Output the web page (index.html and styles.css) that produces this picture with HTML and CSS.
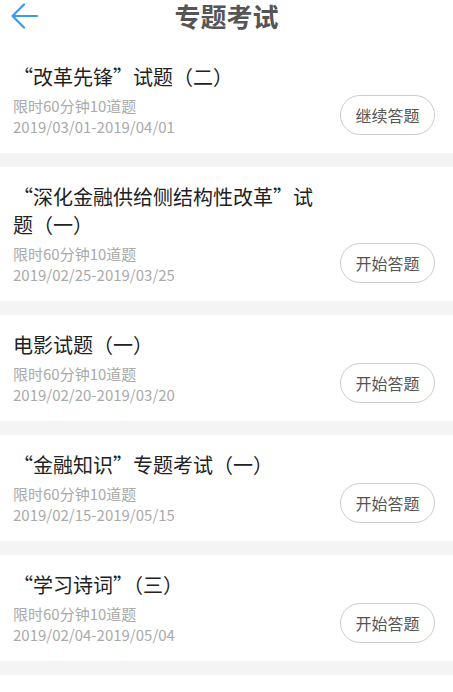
FILE: index.html
```html
<!DOCTYPE html>
<html lang="zh-CN">
<head>
    <meta charset="UTF-8">
    <meta name="viewport" content="width=453, initial-scale=1.0">
    <title>专题考试</title>
    <link rel="stylesheet" href="styles.css">
</head>
<body>
    <div class="header">
        <a href="#" class="back-button">
            <svg width="28" height="26" viewBox="0 0 28 26">
                <path d="M13 1.5 L1.5 13 L13 24.5 M1.5 13 L26 13" fill="none" stroke="#3a9af4" stroke-width="2.2" stroke-linecap="round" stroke-linejoin="round"/>
            </svg>
        </a>
        <div class="page-title">专题考试</div>
    </div>

    <div class="exam-list">
        <div class="exam-card">
            <div class="exam-info">
                <div class="exam-title">“改革先锋”试题（二）</div>
                <div class="exam-meta">限时60分钟10道题</div>
                <div class="exam-date">2019/03/01-2019/04/01</div>
            </div>
            <button class="exam-button">继续答题</button>
        </div>
        <div class="exam-card">
            <div class="exam-info">
                <div class="exam-title">“深化金融供给侧结构性改革”试题（一）</div>
                <div class="exam-meta">限时60分钟10道题</div>
                <div class="exam-date">2019/02/25-2019/03/25</div>
            </div>
            <button class="exam-button">开始答题</button>
        </div>
        <div class="exam-card">
            <div class="exam-info">
                <div class="exam-title">电影试题（一）</div>
                <div class="exam-meta">限时60分钟10道题</div>
                <div class="exam-date">2019/02/20-2019/03/20</div>
            </div>
            <button class="exam-button">开始答题</button>
        </div>
        <div class="exam-card">
            <div class="exam-info">
                <div class="exam-title">“金融知识”专题考试（一）</div>
                <div class="exam-meta">限时60分钟10道题</div>
                <div class="exam-date">2019/02/15-2019/05/15</div>
            </div>
            <button class="exam-button">开始答题</button>
        </div>
        <div class="exam-card">
            <div class="exam-info">
                <div class="exam-title">“学习诗词”（三）</div>
                <div class="exam-meta">限时60分钟10道题</div>
                <div class="exam-date">2019/02/04-2019/05/04</div>
            </div>
            <button class="exam-button">开始答题</button>
        </div>
    </div>
</body>
</html>
```

FILE: styles.css
```css
body {
    margin: 0;
    padding: 0;
    background: #fff;
    font-family: "Noto Sans CJK SC", "Noto Sans", sans-serif;
    overflow: hidden;
}

.header {
    position: relative;
    height: 47px;
}

.back-button {
    position: absolute;
    top: 3px;
    left: 11px;
    display: block;
    width: 28px;
    height: 26px;
}

.back-button svg {
    display: block;
}

.page-title {
    padding-top: 2px;
    text-align: center;
    font-size: 26px;
    font-weight: bold;
    color: #555;
    line-height: 28px;
}

.exam-card {
    display: flex;
    justify-content: space-between;
    align-items: flex-end;
    padding: 16px 18px 18px 13px;
    border-bottom: 14px solid #f4f4f4;
}

.exam-info {
    flex: 1;
}

.exam-title {
    max-width: 310px;
    font-size: 20px;
    line-height: 28px;
    color: #222;
}

.exam-meta {
    margin-top: 4px;
    font-size: 15px;
    line-height: 22px;
    color: #aaa;
}

.exam-date {
    font-size: 15px;
    line-height: 20px;
    color: #aaa;
    margin-bottom: -2px;
}

.exam-button {
    flex-shrink: 0;
    width: 95px;
    height: 40px;
    padding: 0;
    border: 1px solid #ccc;
    border-radius: 20px;
    background: #fff;
    color: #555;
    font-family: inherit;
    font-size: 16px;
    cursor: pointer;
    outline: none;
}
```
